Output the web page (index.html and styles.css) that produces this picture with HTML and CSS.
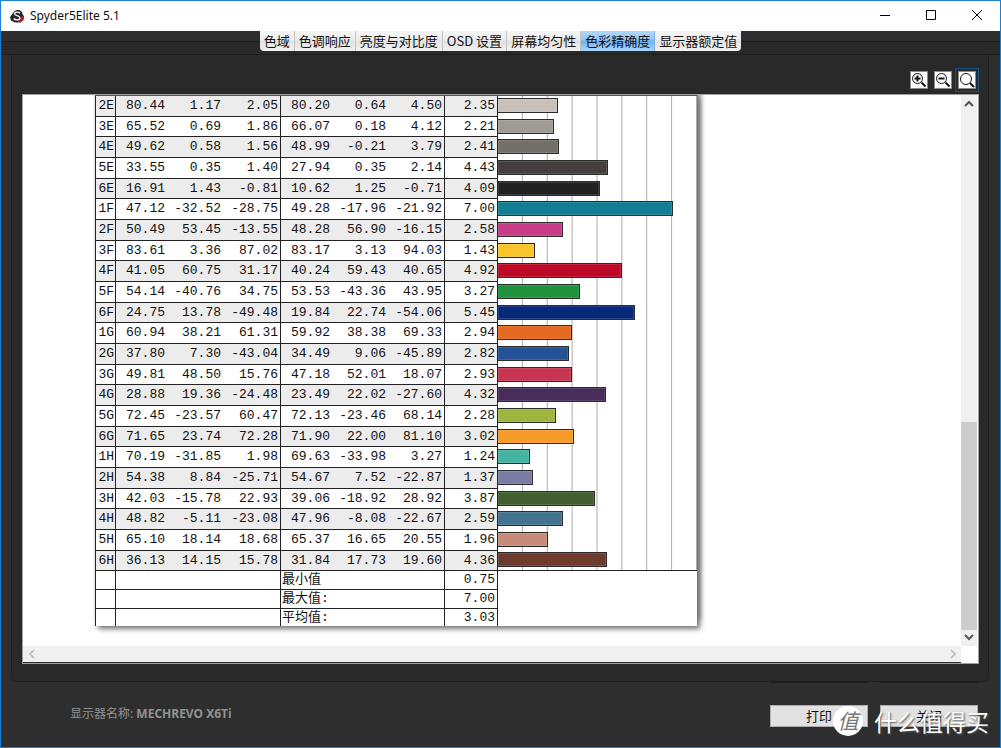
FILE: index.html
```html
<!DOCTYPE html>
<html lang="zh-CN">
<head>
<meta charset="utf-8">
<title>Spyder5Elite 5.1</title>
<link rel="stylesheet" href="styles.css">
</head>
<body>
<div class="window">
  <header class="titlebar">
    <svg class="logo" viewBox="0 0 14 14" aria-hidden="true">
      <path d="M4 2.500L6.500 1h3L12 3l.5 2L14 7.500 13.500 11l-3 2.500h-6L1 11.500 0 8l2-2.500z" fill="#26262a"/>
      <path d="M9 9l4.500-2.500L13 11l-2.500 2H8z" fill="#c0182e"/>
      <path d="M10 4.200C8.500 2.500 4.500 2.800 4.600 5c.1 2 5.400 1.500 5.300 3.900-.1 2.400-4.400 2.500-6.200.6" fill="none" stroke="#fff" stroke-width="1.300"/>
    </svg>
    <h1 class="caption">Spyder5Elite 5.1</h1>
    <div class="controls">
      <button class="control" aria-label="最小化"><svg viewBox="0 0 12 12"><path d="M1 5.500h10"/></svg></button>
      <button class="control" aria-label="最大化"><svg viewBox="0 0 12 12"><path d="M1.500 .5h9v9h-9z"/></svg></button>
      <button class="control" aria-label="关闭窗口"><svg viewBox="0 0 12 12"><path d="M1 0l10 10M11 0L1 10"/></svg></button>
    </div>
  </header>

  <nav class="tabs">
    <button class="tab">色域</button>
    <button class="tab">色调响应</button>
    <button class="tab">亮度与对比度</button>
    <button class="tab">OSD 设置</button>
    <button class="tab">屏幕均匀性</button>
    <button class="tab active">色彩精确度</button>
    <button class="tab">显示器额定值</button>
  </nav>

  <main class="panel">
    <div class="zoombar">
      <button class="zoom" aria-label="放大"><svg viewBox="0 0 16 16"><circle cx="6.500" cy="6.500" r="5"/><path d="M10.500 10.500l4 4" class="handle"/><path d="M3.500 6.500h6M6.500 3.500v6" class="sign"/></svg></button>
      <button class="zoom" aria-label="缩小"><svg viewBox="0 0 16 16"><circle cx="6.500" cy="6.500" r="5"/><path d="M10.500 10.500l4 4" class="handle"/><path d="M3.500 6.500h6" class="sign"/></svg></button>
      <button class="zoom focused" aria-label="适合窗口"><svg viewBox="0 0 16 16"><circle cx="7" cy="7" r="5.500"/><path d="M11 11l4 4" class="handle"/></svg></button>
    </div>

    <section class="viewer">
      <div class="document">
        <table class="report">
          <colgroup><col class="c-id"><col class="c-first"><col class="c-mid"><col class="c-last"><col class="c-first"><col class="c-mid"><col class="c-mid"><col class="c-delta"><col></colgroup>
          <tbody class="data">
            <tr><th>2E</th><td>80.44</td><td>1.17</td><td>2.05</td><td>80.20</td><td>0.64</td><td>4.50</td><td>2.35</td><td><div class="bar" style="width:30%;background:#cac2ba"></div></td></tr>
            <tr><th>3E</th><td>65.52</td><td>0.69</td><td>1.86</td><td>66.07</td><td>0.18</td><td>4.12</td><td>2.21</td><td><div class="bar" style="width:28%;background:#9f9b94"></div></td></tr>
            <tr><th>4E</th><td>49.62</td><td>0.58</td><td>1.56</td><td>48.99</td><td>-0.21</td><td>3.79</td><td>2.41</td><td><div class="bar" style="width:30.500%;background:#73706a"></div></td></tr>
            <tr><th>5E</th><td>33.55</td><td>0.35</td><td>1.40</td><td>27.94</td><td>0.35</td><td>2.14</td><td>4.43</td><td><div class="bar" style="width:55.500%;background:#443f3c"></div></td></tr>
            <tr><th>6E</th><td>16.91</td><td>1.43</td><td>-0.81</td><td>10.62</td><td>1.25</td><td>-0.71</td><td>4.09</td><td><div class="bar" style="width:51.500%;background:#212023"></div></td></tr>
            <tr><th>1F</th><td>47.12</td><td>-32.52</td><td>-28.75</td><td>49.28</td><td>-17.96</td><td>-21.92</td><td>7.00</td><td><div class="bar" style="width:88%;background:#117e94"></div></td></tr>
            <tr><th>2F</th><td>50.49</td><td>53.45</td><td>-13.55</td><td>48.28</td><td>56.90</td><td>-16.15</td><td>2.58</td><td><div class="bar" style="width:32.500%;background:#c83d87"></div></td></tr>
            <tr><th>3F</th><td>83.61</td><td>3.36</td><td>87.02</td><td>83.17</td><td>3.13</td><td>94.03</td><td>1.43</td><td><div class="bar" style="width:18.500%;background:#fac52b"></div></td></tr>
            <tr><th>4F</th><td>41.05</td><td>60.75</td><td>31.17</td><td>40.24</td><td>59.43</td><td>40.65</td><td>4.92</td><td><div class="bar" style="width:62.500%;background:#bd0926"></div></td></tr>
            <tr><th>5F</th><td>54.14</td><td>-40.76</td><td>34.75</td><td>53.53</td><td>-43.36</td><td>43.95</td><td>3.27</td><td><div class="bar" style="width:41%;background:#1f923d"></div></td></tr>
            <tr><th>6F</th><td>24.75</td><td>13.78</td><td>-49.48</td><td>19.84</td><td>22.74</td><td>-54.06</td><td>5.45</td><td><div class="bar" style="width:69%;background:#062a78"></div></td></tr>
            <tr><th>1G</th><td>60.94</td><td>38.21</td><td>61.31</td><td>59.92</td><td>38.38</td><td>69.33</td><td>2.94</td><td><div class="bar" style="width:37%;background:#e56921"></div></td></tr>
            <tr><th>2G</th><td>37.80</td><td>7.30</td><td>-43.04</td><td>34.49</td><td>9.06</td><td>-45.89</td><td>2.82</td><td><div class="bar" style="width:35.500%;background:#235297"></div></td></tr>
            <tr><th>3G</th><td>49.81</td><td>48.50</td><td>15.76</td><td>47.18</td><td>52.01</td><td>18.07</td><td>2.93</td><td><div class="bar" style="width:37%;background:#c63551"></div></td></tr>
            <tr><th>4G</th><td>28.88</td><td>19.36</td><td>-24.48</td><td>23.49</td><td>22.02</td><td>-27.60</td><td>4.32</td><td><div class="bar" style="width:54.500%;background:#482d5b"></div></td></tr>
            <tr><th>5G</th><td>72.45</td><td>-23.57</td><td>60.47</td><td>72.13</td><td>-23.46</td><td>68.14</td><td>2.28</td><td><div class="bar" style="width:29%;background:#9eb63f"></div></td></tr>
            <tr><th>6G</th><td>71.65</td><td>23.74</td><td>72.28</td><td>71.90</td><td>22.00</td><td>81.10</td><td>3.02</td><td><div class="bar" style="width:38%;background:#f69a29"></div></td></tr>
            <tr><th>1H</th><td>70.19</td><td>-31.85</td><td>1.98</td><td>69.63</td><td>-33.98</td><td>3.27</td><td>1.24</td><td><div class="bar" style="width:16%;background:#43b4a1"></div></td></tr>
            <tr><th>2H</th><td>54.38</td><td>8.84</td><td>-25.71</td><td>54.67</td><td>7.52</td><td>-22.87</td><td>1.37</td><td><div class="bar" style="width:17.500%;background:#7b7ca5"></div></td></tr>
            <tr><th>3H</th><td>42.03</td><td>-15.78</td><td>22.93</td><td>39.06</td><td>-18.92</td><td>28.92</td><td>3.87</td><td><div class="bar" style="width:48.500%;background:#42602f"></div></td></tr>
            <tr><th>4H</th><td>48.82</td><td>-5.11</td><td>-23.08</td><td>47.96</td><td>-8.08</td><td>-22.67</td><td>2.59</td><td><div class="bar" style="width:32.500%;background:#437391"></div></td></tr>
            <tr><th>5H</th><td>65.10</td><td>18.14</td><td>18.68</td><td>65.37</td><td>16.65</td><td>20.55</td><td>1.96</td><td><div class="bar" style="width:25%;background:#c88b78"></div></td></tr>
            <tr><th>6H</th><td>36.13</td><td>14.15</td><td>15.78</td><td>31.84</td><td>17.73</td><td>19.60</td><td>4.36</td><td><div class="bar" style="width:55%;background:#6d3a2e"></div></td></tr>
          </tbody>
          <tbody class="summary">
            <tr><td></td><td colspan="3"></td><th colspan="3">最小值</th><td>0.75</td><td></td></tr>
            <tr><td></td><td colspan="3"></td><th colspan="3">最大值:</th><td>7.00</td><td></td></tr>
            <tr><td></td><td colspan="3"></td><th colspan="3">平均值:</th><td>3.03</td><td></td></tr>
          </tbody>
        </table>
      </div>
      <div class="vscroll">
        <svg class="arrow" viewBox="0 0 16 16"><path d="M4 11l4-4 4 4"/></svg>
        <div class="track"><div class="thumb"></div></div>
        <svg class="arrow" viewBox="0 0 16 16"><path d="M4 5l4 4 4-4"/></svg>
      </div>
      <div class="hscroll">
        <svg class="arrow pale" viewBox="0 0 16 16"><path d="M11 4L7 8l4 4"/></svg>
        <svg class="arrow pale" viewBox="0 0 16 16"><path d="M6 4l4 4-4 4"/></svg>
      </div>
    </section>
  </main>

  <footer class="footer">
    <p class="monitor">显示器名称: <strong>MECHREVO X6Ti</strong></p>
    <div class="actions">
      <div class="slot"><button class="action">打印</button></div>
      <div class="slot"><button class="action">关闭</button></div>
    </div>
    <div class="watermark"><span class="seal">值</span><span>什么值得买</span></div>
  </footer>
</div>
</body>
</html>
```

FILE: styles.css
```css
* { box-sizing: border-box; }

body {
  margin: 0;
  font-family: "Noto Sans", "Noto Sans CJK SC", sans-serif;
  font-size: 13px;
  color: #111;
}

button {
  margin: 0;
  padding: 0;
  border: 0;
  font: inherit;
  color: inherit;
}

.window {
  display: flex;
  flex-direction: column;
  min-height: 100vh;
  border: 1px solid #1a80d8;
  background: #2e2e2e;
}

.titlebar {
  display: flex;
  align-items: center;
  height: 30px;
  padding-left: 9px;
  background: #fff;
}

.logo { width: 14px; height: 14px; }

.caption {
  margin: 0 auto 0 6px;
  font-size: 12px;
  line-height: 16px;
  font-weight: 400;
}

.controls { display: flex; }

.control {
  display: grid;
  place-items: center;
  width: 46px;
  height: 29px;
  background: none;
}

.control svg {
  width: 12px;
  height: 12px;
  fill: none;
  stroke: #000;
  overflow: visible;
}

.tabs {
  display: flex;
  justify-content: center;
  height: 24px;
  background: linear-gradient(#2e2e2e 10px, #1f1f1f 10px, #1f1f1f 11px, #292929 11px, #292929 23px, #1f1f1f 23px);
}

.tab {
  height: 20px;
  padding: 0 4px;
  border-right: 1px solid #c4c4c4;
  background: linear-gradient(#f6f6f6, #ececec 45%, #e2e2e2 50%, #f2f2f2);
  font-family: "Noto Sans CJK SC", sans-serif;
  line-height: 18px;
}

.tab:first-child { border-radius: 0 0 0 4px; }
.tab:last-child { border-right: 0; border-radius: 0 0 4px 0; }

.tab.active {
  border-right-color: #7db4e4;
  background: linear-gradient(#b5d7fa, #93c5f8 45%, #6fb0f5 50%, #a9d6fc);
}

.panel {
  display: flex;
  flex: 1;
  flex-direction: column;
  margin: 0 11px 0 10px;
  padding: 13px 9px 17px 10px;
  border: 1px solid #1f1f1f;
  border-top: 0;
  border-radius: 0 0 5px 5px;
  background: #292929;
}

.zoombar {
  display: flex;
  align-items: center;
  justify-content: flex-end;
  gap: 6px;
  height: 24px;
  margin-bottom: 2px;
}

.zoom {
  width: 18px;
  height: 18px;
  border: 1px solid #8a8a8a;
  background: #fff;
}

.zoom svg {
  display: block;
  width: 16px;
  height: 16px;
  fill: none;
  stroke: #111;
}

.zoom .handle { stroke-width: 2; }
.zoom .sign { stroke-width: 2; }

.focused {
  margin-right: 3px;
  outline: 1px solid #13548c;
  outline-offset: 2px;
}

.viewer {
  display: grid;
  grid-template-columns: 1fr 16px;
  grid-template-rows: 1fr 17px;
  flex: 1;
  padding-right: 1px;
  border: 1px solid #a0a0a0;
  background: #fff;
}

.document {
  padding: 0 0 19px 72px;
  overflow: hidden;
}

.report {
  width: 602px;
  table-layout: fixed;
  border-spacing: 0;
  border-top: 1px solid #555;
  box-shadow: 3px 3px 5px #777, 3px -6px 5px #777;
  background: #fff;
  font-family: "Liberation Mono", "Noto Sans CJK SC", monospace;
  font-size: 13px;
  line-height: 18px;
}

.c-id { width: 21px; }
.c-first { width: 52px; }
.c-mid { width: 56px; }
.c-last { width: 57px; }
.c-delta { width: 53px; }

.report th,
.report td {
  height: 21px;
  padding: 0 2px 0 0;
  border-bottom: 1px solid #222;
  font-weight: 400;
  text-align: right;
  white-space: nowrap;
}

.report .data tr:nth-child(3n+2) > * { height: 20px; }
.report .data tr:nth-child(odd) > * { background-color: #ececec; }

.report th:first-child,
.report td:first-child {
  padding: 0 1px;
  border-left: 1px solid #222;
  border-right: 1px solid #222;
}

.data td:nth-child(2),
.data td:nth-child(3),
.data td:nth-child(5),
.data td:nth-child(6) { padding-right: 3px; }

.data td:nth-child(4),
.data td:nth-child(7),
.data td:nth-child(8) { border-right: 1px solid #222; }

.report .data td:last-child {
  padding: 0 0 2px;
  border-bottom: 0;
  background: #fff linear-gradient(to right, transparent calc(100% - 1px), #aaa 0) 0 0 / 12.5% 100%;
}

.report .data tr:last-child td:last-child { border-bottom: 1px solid #222; }

.bar {
  height: 15px;
  border: 1px solid #2b2b2b;
  border-left: 0;
  box-shadow: inset 0 0 0 1px rgba(255, 255, 255, 0.12);
}

.report .summary {
  line-height: 16px;
}

.report .summary tr > * { height: 19px; }

.summary tr > :not(:last-child) { border-right: 1px solid #222; }

.report .summary th {
  padding-left: 1px;
  text-align: left;
}

.report .summary td:last-child,
.report .summary tr:last-child > * { border-bottom: 0; }

.report .summary tr:last-child > * { height: 17px; }

.vscroll {
  display: flex;
  flex-direction: column;
  background: #f0f0f0;
}

.track {
  display: flex;
  flex: 1;
  flex-direction: column;
  justify-content: flex-end;
}

.thumb { height: 40%; background: #cdcdcd; }

.hscroll {
  display: flex;
  justify-content: space-between;
  border-bottom: 1px solid #292929;
  background: #f0f0f0;
}

.arrow {
  width: 16px;
  height: 16px;
  fill: none;
  stroke: #555;
  stroke-width: 2;
}

.pale { stroke: #b8b8b8; stroke-width: 1.5; }

.footer {
  position: relative;
  display: flex;
  justify-content: space-between;
  height: 65px;
  padding: 0 22px 0 69px;
}

.monitor {
  margin: 23px 0 0;
  color: #929292;
  font-size: 12px;
  line-height: 18px;
}

.actions { display: flex; gap: 12px; }

.slot {
  width: 98px;
  height: 46px;
  padding-top: 22px;
  border-top: 1px solid #1f1f1f;
}

.action {
  width: 100%;
  height: 22px;
  border: 1px solid #adadad;
  background: #e1e1e1;
  font-family: "Noto Sans CJK SC", sans-serif;
  line-height: 18px;
}

.watermark {
  position: absolute;
  right: 11px;
  bottom: 11px;
  display: flex;
  align-items: center;
  gap: 11px;
  color: #fff;
  font-family: "Noto Sans CJK SC", sans-serif;
  font-size: 23px;
  line-height: 28px;
  text-shadow: 1px 1px 2px #555;
  pointer-events: none;
}

.seal {
  width: 30px;
  height: 30px;
  border-radius: 50%;
  background: #fff;
  color: #777;
  font-size: 21px;
  font-style: italic;
  line-height: 28px;
  text-align: center;
  text-shadow: none;
}
```
